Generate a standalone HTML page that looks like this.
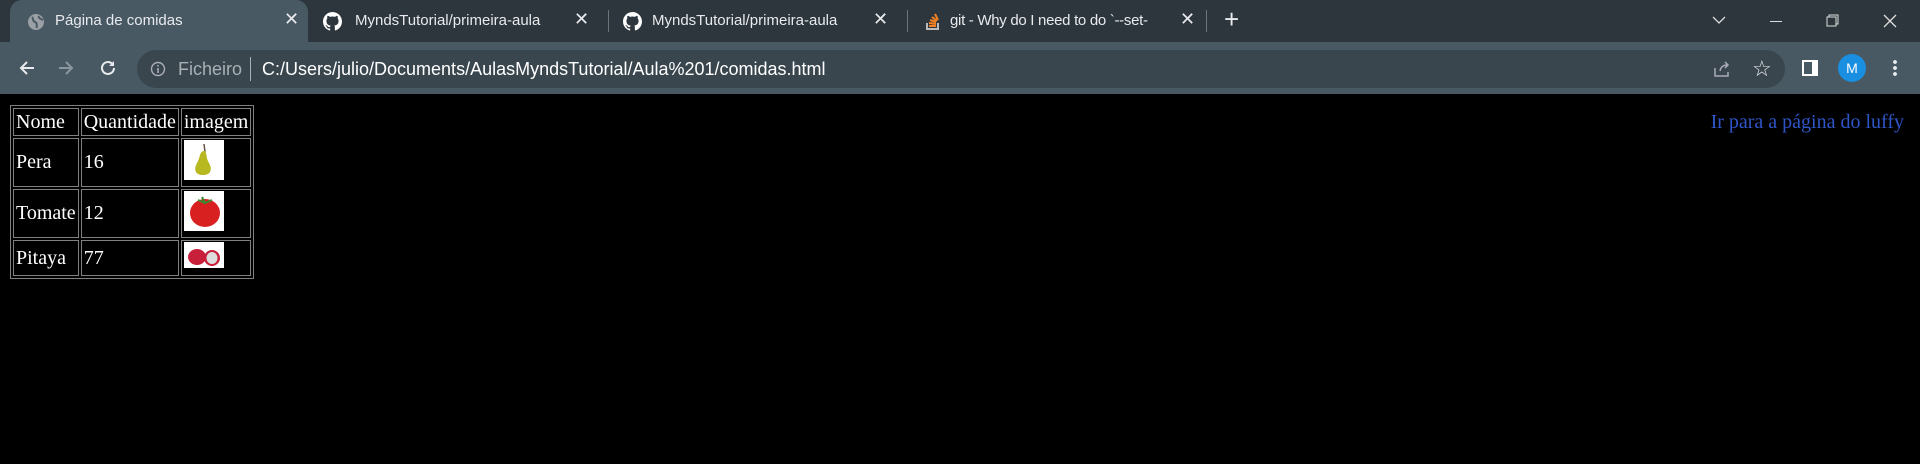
<!DOCTYPE html>
<html><head><meta charset="utf-8"><style>
*{margin:0;padding:0;box-sizing:border-box}
body{width:1920px;height:464px;background:#000;overflow:hidden;font-family:"Liberation Sans",sans-serif;position:relative}
.tabbar{position:absolute;left:0;top:0;width:1920px;height:42px;background:#2d363c}
.toolbar{position:absolute;left:0;top:42px;width:1920px;height:52px;background:#485963}
.t{position:absolute;color:#e8eaed;font-size:15px;top:12px;white-space:nowrap}
.ab{position:absolute;left:10px;top:0;width:298px;height:44px;background:#485963;border-radius:12px 12px 0 0}
.sep{position:absolute;top:10px;width:1px;height:22px;background:#69757c}
.omni{position:absolute;left:137px;top:50px;width:1648px;height:38px;background:#39464e;border-radius:19px}
.ic{position:absolute}
.page{position:absolute;top:94px;left:0;width:1920px;height:370px;background:#000}
table{position:absolute;left:10px;top:105px;border:1px solid #808080;border-spacing:2px;font-family:"Liberation Serif",serif;font-size:20px;color:#fff}
td{border:1px solid #808080;padding:1px 2px}
.img{display:block;width:40px;height:40px;background:#fff;position:relative}
a{position:absolute;right:16px;top:111px;color:#2f55c8;font-family:"Liberation Serif",serif;font-size:20px;text-decoration:none}
</style></head><body>
<div class="tabbar">
<div class="ab"></div>
<svg class="ic" style="left:27px;top:13px" width="18" height="18"><circle cx="9" cy="9" r="8" fill="#9aa0a6"/><path d="M5 4c2 2 0 4 3 5s1 4 2 6M12 3c-1 2 2 3 4 4" stroke="#485963" stroke-width="2" fill="none"/></svg>
<div class="t" style="left:55px">Página de comidas</div>
<div class="t" style="left:284px;font-size:18px;top:9px">✕</div>
<svg class="ic" style="left:323px;top:12px" width="19" height="19" viewBox="0 0 16 16"><path fill="#fff" d="M8 0C3.6 0 0 3.6 0 8c0 3.5 2.3 6.5 5.5 7.6.4.1.5-.2.5-.4v-1.4c-2.2.5-2.700-1-2.700-1-.4-.9-.9-1.200-.9-1.200-.7-.5.1-.5.1-.5.8.1 1.2.8 1.2.8.7 1.2 1.9.9 2.3.7.1-.5.3-.9.5-1.1-1.8-.2-3.6-.9-3.6-4 0-.9.3-1.6.8-2.1-.1-.2-.4-1 .1-2.1 0 0 .7-.2 2.2.8.6-.2 1.3-.3 2-.3s1.4.1 2 .3c1.5-1 2.2-.8 2.2-.8.4 1.1.2 1.9.1 2.1.5.6.8 1.3.8 2.1 0 3.1-1.9 3.7-3.6 3.9.3.3.5.8.5 1.5v2.2c0 .2.1.5.6.4C13.7 14.5 16 11.5 16 8c0-4.4-3.6-8-8-8z"/></svg>
<div class="t" style="left:355px">MyndsTutorial/primeira-aula</div>
<div class="t" style="left:574px;font-size:18px;top:9px">✕</div>
<div class="sep" style="left:608px"></div>
<svg class="ic" style="left:623px;top:12px" width="19" height="19" viewBox="0 0 16 16"><path fill="#fff" d="M8 0C3.6 0 0 3.6 0 8c0 3.5 2.3 6.5 5.5 7.6.4.1.5-.2.5-.4v-1.4c-2.2.5-2.7-1-2.7-1-.4-.9-.9-1.2-.9-1.2-.7-.5.1-.5.1-.5.8.1 1.2.8 1.2.8.7 1.2 1.9.9 2.3.7.1-.5.3-.9.5-1.1-1.8-.2-3.6-.9-3.6-4 0-.9.3-1.6.8-2.1-.1-.2-.4-1 .1-2.1 0 0 .7-.2 2.2.8.6-.2 1.3-.3 2-.3s1.4.1 2 .3c1.5-1 2.2-.8 2.2-.8.4 1.1.2 1.9.1 2.1.5.6.8 1.3.8 2.1 0 3.1-1.9 3.7-3.6 3.900.3.3.5.8.5 1.5v2.2c0 .2.1.5.6.4C13.7 14.5 16 11.5 16 8c0-4.4-3.6-8-8-8z"/></svg>
<div class="t" style="left:652px">MyndsTutorial/primeira-aula</div>
<div class="t" style="left:873px;font-size:18px;top:9px">✕</div>
<div class="sep" style="left:907px"></div>
<svg class="ic" style="left:925px;top:12px" width="16" height="19"><path d="M2 11v6h11v-6" stroke="#bcbbbb" stroke-width="2" fill="none"/><path d="M4 14h7M4 11l7 1M5 8l6 2M7 5l5 4M10 2l3 6" stroke="#f48024" stroke-width="2"/></svg>
<div class="t" style="left:950px;width:200px;overflow:hidden;letter-spacing:-0.3px">git - Why do I need to do `--set-</div>
<div class="t" style="left:1180px;font-size:18px;top:9px">✕</div>
<div class="sep" style="left:1206px"></div>
<div class="t" style="left:1224px;font-size:26px;top:4px">+</div>
<svg class="ic" style="left:1712px;top:16px" width="14" height="9"><path d="M1 1l6 6 6-6" stroke="#ddd" fill="none" stroke-width="1.3"/></svg>
<div class="ic" style="left:1770px;top:21px;width:12px;height:1px;background:#ddd"></div>
<svg class="ic" style="left:1826px;top:14px" width="13" height="13"><rect x="1" y="3" width="9" height="9" stroke="#ddd" fill="none"/><path d="M3 3V1h9v9h-2" stroke="#ddd" fill="none"/></svg>
<svg class="ic" style="left:1883px;top:14px" width="14" height="14"><path d="M1 1l12 12M13 1L1 13" stroke="#ddd" stroke-width="1.3"/></svg>
</div>
<div class="toolbar"></div>
<svg class="ic" style="left:18px;top:59px" width="18" height="18"><path d="M16 9H3M9 3L3 9l6 6" stroke="#e8eaed" stroke-width="2" fill="none"/></svg>
<svg class="ic" style="left:57px;top:59px" width="18" height="18"><path d="M2 9h13M9 3l6 6-6 6" stroke="#8a979e" stroke-width="2" fill="none"/></svg>
<svg class="ic" style="left:99px;top:59px" width="18" height="18"><path d="M15 9a6 6 0 1 1-2-4.5" stroke="#e8eaed" stroke-width="2" fill="none"/><path d="M15 2v5h-5z" fill="#e8eaed"/></svg>
<div class="omni"></div>
<svg class="ic" style="left:150px;top:61px" width="16" height="16"><circle cx="8" cy="8" r="6.5" stroke="#aab" fill="none" stroke-width="1.4"/><path d="M8 7v5M8 4v1.5" stroke="#aab" stroke-width="1.6"/></svg>
<div class="ic" style="left:178px;top:59px;color:#a7b0b5;font-size:18px">Ficheiro</div>
<div class="ic" style="left:250px;top:57px;width:1px;height:24px;background:#a7b0b5"></div>
<div class="ic" style="left:262px;top:59px;color:#fff;font-size:18px">C:/Users/julio/Documents/AulasMyndsTutorial/Aula%201/comidas.html</div>
<svg class="ic" style="left:1712px;top:59px" width="20" height="20"><path d="M3 9v8h13v-4M8 12c1-5 4-6 8-6M13 3l3 3-3 3" stroke="#aab" stroke-width="1.5" fill="none"/></svg>
<div class="ic" style="left:1752px;top:56px;color:#e8eaed;font-size:22px">☆</div>
<div class="ic" style="left:1802px;top:60px;width:16px;height:16px;border:2px solid #fff;border-right:6px solid #fff"></div>
<div class="ic" style="left:1838px;top:54px;width:28px;height:28px;border-radius:50%;background:#1a8ee0;color:#fff;font-size:14px;text-align:center;line-height:28px">M</div>
<div class="ic" style="left:1893px;top:59px;width:4px;height:18px;background:radial-gradient(circle,#e8eaed 1.8px,transparent 2px) 0 0/4px 6px"></div>
<div class="page"></div>
<table>
<tr style="height:28px"><td style="width:64px">Nome</td><td>Quantidade</td><td>imagem</td></tr>
<tr style="height:49px"><td>Pera</td><td>16</td><td style="vertical-align:top"><span class="img"><svg width="40" height="40"><path d="M20 4l1 8" stroke="#654" stroke-width="1.5"/><path d="M20 11c-4 0-4 6-6 10s-4 7-2 11c2 4 12 4 14 0 2-4 0-7-2-11s-1-10-4-10z" fill="#b8b820"/></svg></span></td></tr>
<tr style="height:49px"><td>Tomate</td><td>12</td><td style="vertical-align:top"><span class="img"><svg width="40" height="40"><ellipse cx="21" cy="22" rx="15" ry="14" fill="#d82020"/><path d="M14 9l7 3 7-3M21 12l-3-6" stroke="#3a8a30" stroke-width="2" fill="none"/></svg></span></td></tr>
<tr style="height:36px"><td>Pitaya</td><td>77</td><td style="vertical-align:top"><span class="img" style="height:26px"><svg width="40" height="26"><ellipse cx="13" cy="15" rx="9" ry="8" fill="#c8203a"/><ellipse cx="28" cy="16" rx="8" ry="8" fill="#c8203a"/><ellipse cx="28" cy="16" rx="5.5" ry="6" fill="#ddd"/></svg></span></td></tr>
</table>
<a>Ir para a página do luffy</a>
</body></html>
